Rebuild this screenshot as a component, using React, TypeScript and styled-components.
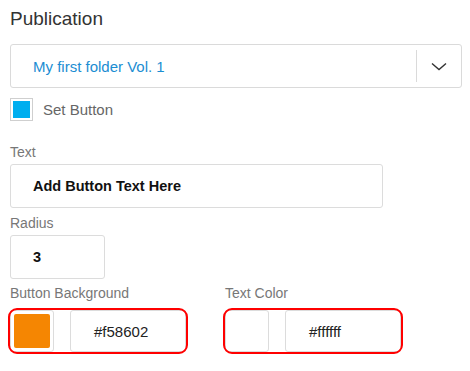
import styled, { createGlobalStyle } from 'styled-components';

const GlobalStyle = createGlobalStyle`
  body {
    margin: 0;
    background: #fff;
    font-family: 'Liberation Sans', Arial, sans-serif;
  }
`;

const Panel = styled.div`
  padding: 8px 0 0 10px;
  width: 452px;
`;

const Title = styled.h2`
  margin: 0 0 14px;
  font-size: 19px;
  line-height: 22px;
  font-weight: 400;
  color: #333;
`;

const Select = styled.div`
  box-sizing: border-box;
  display: flex;
  align-items: center;
  height: 44px;
  border: 1px solid #dadada;
  border-radius: 3px;

  .value {
    flex: 1;
    padding-left: 22px;
    font-size: 15px;
    color: #1b8dd2;
  }

  .arrow {
    display: flex;
    align-items: center;
    justify-content: center;
    width: 44px;
    height: 32px;
    border-left: 1px solid #dadada;
  }
`;

const CheckRow = styled.label`
  display: flex;
  align-items: center;
  gap: 10px;
  margin-top: 10px;
  height: 23px;
  font-size: 15px;
  color: #666;
`;

const CheckBox = styled.span<{ $checked: boolean }>`
  box-sizing: border-box;
  display: block;
  width: 23px;
  height: 23px;
  padding: 2px;
  border: 1px solid #cfcfcf;

  &::after {
    content: '';
    display: block;
    width: 100%;
    height: 100%;
    background: ${(p) => (p.$checked ? '#00aeef' : 'transparent')};
  }
`;

const Field = styled.div<{ $top: number }>`
  margin-top: ${(p) => p.$top}px;
`;

const Label = styled.div`
  margin-bottom: 3px;
  font-size: 14px;
  line-height: 17px;
  color: #777;
`;

const TextInput = styled.div<{ $width: number }>`
  box-sizing: border-box;
  display: flex;
  align-items: center;
  width: ${(p) => p.$width}px;
  height: 44px;
  padding-left: 22px;
  border: 1px solid #dcdcdc;
  border-radius: 3px;
  font-size: 14.5px;
  font-weight: 700;
  color: #111;
`;

const ColorRow = styled.div`
  display: grid;
  grid-template-columns: 215px auto;
  margin-top: 6px;
  padding-bottom: 4px;
`;

const ColorField = styled.div`
  display: flex;
  gap: 16px;
  width: 176px;
  height: 42px;
  margin-top: 8px;
  border-radius: 7px;
  outline: 2px solid #ff0000;
`;

const Swatch = styled.div<{ $color: string }>`
  box-sizing: border-box;
  width: 44px;
  height: 42px;
  padding: 3px;
  border: 1px solid #dcdcdc;
  border-radius: 3px;

  &::after {
    content: '';
    display: block;
    width: 100%;
    height: 100%;
    border-radius: 2px;
    background: ${(p) => p.$color};
  }
`;

const HexInput = styled.div`
  box-sizing: border-box;
  display: flex;
  align-items: center;
  flex: 1;
  padding-left: 23px;
  border: 1px solid #dcdcdc;
  border-radius: 3px;
  font-size: 15px;
  color: #222;
`;

function Chevron() {
  return (
    <svg width="16" height="9" viewBox="0 0 16 9">
      <path d="M1 1.5 L8 7.5 L15 1.5" fill="none" stroke="#333" strokeWidth="1.4" />
    </svg>
  );
}

function ColorPicker({ label, color }: { label: string; color: string }) {
  return (
    <div>
      <Label>{label}</Label>
      <ColorField>
        <Swatch $color={color} />
        <HexInput>{color}</HexInput>
      </ColorField>
    </div>
  );
}

export default function App() {
  return (
    <>
      <GlobalStyle />
      <Panel>
        <Title>Publication</Title>
        <Select>
          <span className="value">My first folder Vol. 1</span>
          <span className="arrow">
            <Chevron />
          </span>
        </Select>
        <CheckRow>
          <CheckBox $checked />
          Set Button
        </CheckRow>
        <Field $top={23}>
          <Label>Text</Label>
          <TextInput $width={373}>Add Button Text Here</TextInput>
        </Field>
        <Field $top={7}>
          <Label>Radius</Label>
          <TextInput $width={95}>3</TextInput>
        </Field>
        <ColorRow>
          <ColorPicker label="Button Background" color="#f58602" />
          <ColorPicker label="Text Color" color="#ffffff" />
        </ColorRow>
      </Panel>
    </>
  );
}
